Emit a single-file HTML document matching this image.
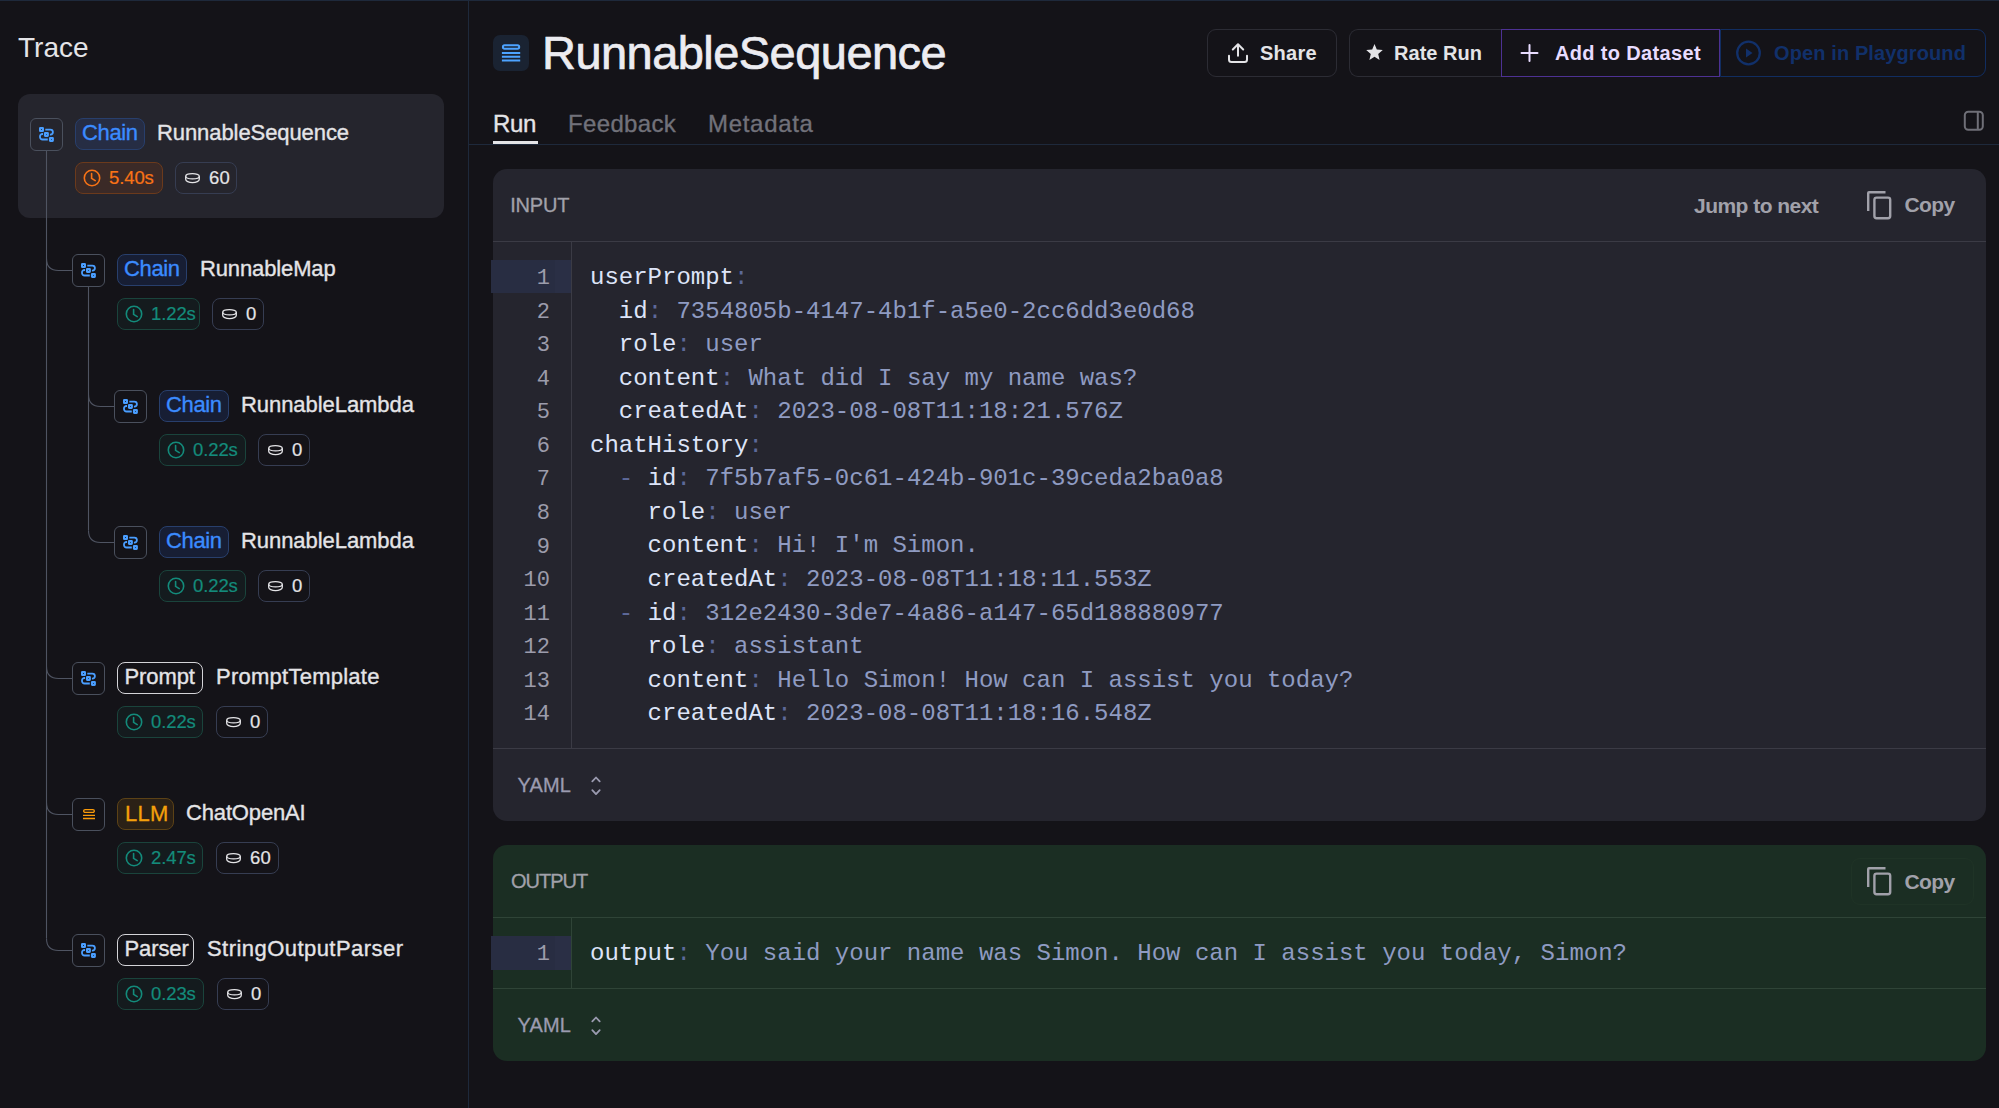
<!DOCTYPE html>
<html><head><meta charset="utf-8"><style>
html,body{margin:0;padding:0;}
body{width:1999px;height:1108px;overflow:hidden;background:#141318;position:relative;font-family:'Liberation Sans', sans-serif;}
</style></head><body>
<div style="position:absolute;left:0px;top:0px;width:1999px;height:1px;background:#1e293b;border-radius:0px;"></div>
<div style="position:absolute;left:468px;top:0px;width:1px;height:1108px;background:#1e293b;border-radius:0px;"></div>
<div style="position:absolute;left:18px;top:34.20px;font:normal 28px/28px 'Liberation Sans', sans-serif;color:#e4e4e7;letter-spacing:0px;white-space:pre;">Trace</div>
<div style="position:absolute;left:18px;top:94px;width:426px;height:124px;background:#25252d;border-radius:12px;"></div>
<svg style="position:absolute;left:0px;top:0px;" width="468" height="1108" viewBox="0 0 468 1108" fill="none"><path d="M46.5 151 L46.5 938.5" stroke="#4f5462" stroke-width="1.1"/><path d="M46.5 258.5 Q46.5 270.5 58.5 270.5 L72 270.5" stroke="#4f5462" stroke-width="1.1"/><path d="M46.5 666.5 Q46.5 678.5 58.5 678.5 L72 678.5" stroke="#4f5462" stroke-width="1.1"/><path d="M46.5 802.5 Q46.5 814.5 58.5 814.5 L72 814.5" stroke="#4f5462" stroke-width="1.1"/><path d="M46.5 938.5 Q46.5 950.5 58.5 950.5 L72 950.5" stroke="#4f5462" stroke-width="1.1"/><path d="M88.5 287 L88.5 530.5" stroke="#4f5462" stroke-width="1.1"/><path d="M88.5 394.5 Q88.5 406.5 100.5 406.5 L114 406.5" stroke="#4f5462" stroke-width="1.1"/><path d="M88.5 530.5 Q88.5 542.5 100.5 542.5 L114 542.5" stroke="#4f5462" stroke-width="1.1"/></svg>
<div style="position:absolute;left:30px;top:118px;width:33px;height:33px;background:#25252d;border:1.3px solid #4a505d;box-sizing:border-box;border-radius:6px;"></div>
<svg style="position:absolute;left:39px;top:127px;" width="15" height="15" viewBox="0 0 15 15" fill="none"><rect x="1.05" y="1.05" width="2.9" height="2.9" rx="0.25" stroke="#4a9eff" stroke-width="2.1"/><rect x="5.95" y="5.95" width="2.9" height="2.9" rx="0.25" stroke="#4a9eff" stroke-width="2.1"/><rect x="10.95" y="10.95" width="2.9" height="2.9" rx="0.25" stroke="#4a9eff" stroke-width="2.1"/><path d="M6.3 2.6 H11.4 A2.5 2.5 0 0 1 13.9 5.1 A2.5 2.5 0 0 1 11.4 7.6 H10.9" stroke="#4a9eff" stroke-width="1.8"/><path d="M4 7 H3.5 A2.5 2.5 0 0 0 1.0 9.5 V10 A2.5 2.5 0 0 0 3.5 12.5 H8.8" stroke="#4a9eff" stroke-width="1.8"/></svg>
<div style="position:absolute;left:75px;top:118px;width:70px;height:32px;background:#262d44;border:1px solid #283f6c;box-sizing:border-box;border-radius:8px;"></div>
<div style="position:absolute;left:82px;top:122.38px;font:normal 22px/22px 'Liberation Sans', sans-serif;color:#3b8bff;letter-spacing:-0.35px;white-space:pre;-webkit-text-stroke:0.35px #3b8bff;">Chain</div>
<div style="position:absolute;left:157px;top:122.38px;font:normal 22px/22px 'Liberation Sans', sans-serif;color:#e4e4e7;letter-spacing:-0.08px;white-space:pre;-webkit-text-stroke:0.35px #e4e4e7;">RunnableSequence</div>
<div style="position:absolute;left:75px;top:162px;width:88px;height:32px;background:#3b2a27;border:1px solid #6b3a1c;box-sizing:border-box;border-radius:8px;"></div>
<svg style="position:absolute;left:83.4px;top:168.6px;" width="18" height="18" viewBox="0 0 18 18" fill="none"><circle cx="9" cy="9" r="7.7" stroke="#f97316" stroke-width="1.6"/><path d="M8.6 4.6 V9.4 L12.2 11.6" stroke="#f97316" stroke-width="1.6" stroke-linecap="round" stroke-linejoin="round"/></svg>
<div style="position:absolute;left:109px;top:169.04px;font:normal 18.5px/18.5px 'Liberation Sans', sans-serif;color:#f97316;letter-spacing:-0.1px;white-space:pre;-webkit-text-stroke:0.2px #f97316;">5.40s</div>
<div style="position:absolute;left:175px;top:162px;width:62px;height:32px;background:transparent;border:1px solid #363d52;box-sizing:border-box;border-radius:8px;"></div>
<svg style="position:absolute;left:185px;top:172.6px;" width="15" height="11" viewBox="0 0 15 11" fill="none"><ellipse cx="7.5" cy="3.3" rx="6.8" ry="2.65" stroke="#e4e4e7" stroke-width="1.3"/><path d="M0.7 3.3 V6.3 A6.8 3.35 0 0 0 14.3 6.3 V3.3" stroke="#e4e4e7" stroke-width="1.3"/></svg>
<div style="position:absolute;left:209px;top:169.04px;font:normal 18.5px/18.5px 'Liberation Sans', sans-serif;color:#e4e4e7;letter-spacing:0.3px;white-space:pre;-webkit-text-stroke:0.2px #e4e4e7;">60</div>
<div style="position:absolute;left:72px;top:254px;width:33px;height:33px;background:#141318;border:1.3px solid #4a505d;box-sizing:border-box;border-radius:6px;"></div>
<svg style="position:absolute;left:81px;top:263px;" width="15" height="15" viewBox="0 0 15 15" fill="none"><rect x="1.05" y="1.05" width="2.9" height="2.9" rx="0.25" stroke="#4a9eff" stroke-width="2.1"/><rect x="5.95" y="5.95" width="2.9" height="2.9" rx="0.25" stroke="#4a9eff" stroke-width="2.1"/><rect x="10.95" y="10.95" width="2.9" height="2.9" rx="0.25" stroke="#4a9eff" stroke-width="2.1"/><path d="M6.3 2.6 H11.4 A2.5 2.5 0 0 1 13.9 5.1 A2.5 2.5 0 0 1 11.4 7.6 H10.9" stroke="#4a9eff" stroke-width="1.8"/><path d="M4 7 H3.5 A2.5 2.5 0 0 0 1.0 9.5 V10 A2.5 2.5 0 0 0 3.5 12.5 H8.8" stroke="#4a9eff" stroke-width="1.8"/></svg>
<div style="position:absolute;left:117px;top:254px;width:70px;height:32px;background:#171e34;border:1px solid #283f6c;box-sizing:border-box;border-radius:8px;"></div>
<div style="position:absolute;left:124px;top:258.38px;font:normal 22px/22px 'Liberation Sans', sans-serif;color:#3b8bff;letter-spacing:-0.35px;white-space:pre;-webkit-text-stroke:0.35px #3b8bff;">Chain</div>
<div style="position:absolute;left:200px;top:258.38px;font:normal 22px/22px 'Liberation Sans', sans-serif;color:#e4e4e7;letter-spacing:-0.13px;white-space:pre;-webkit-text-stroke:0.35px #e4e4e7;">RunnableMap</div>
<div style="position:absolute;left:117px;top:298px;width:83px;height:32px;background:#141b1e;border:1px solid #1a443c;box-sizing:border-box;border-radius:8px;"></div>
<svg style="position:absolute;left:125.4px;top:304.6px;" width="18" height="18" viewBox="0 0 18 18" fill="none"><circle cx="9" cy="9" r="7.7" stroke="#138b7b" stroke-width="1.6"/><path d="M8.6 4.6 V9.4 L12.2 11.6" stroke="#138b7b" stroke-width="1.6" stroke-linecap="round" stroke-linejoin="round"/></svg>
<div style="position:absolute;left:151px;top:305.04px;font:normal 18.5px/18.5px 'Liberation Sans', sans-serif;color:#138b7b;letter-spacing:-0.1px;white-space:pre;-webkit-text-stroke:0.2px #138b7b;">1.22s</div>
<div style="position:absolute;left:212px;top:298px;width:52px;height:32px;background:transparent;border:1px solid #363d52;box-sizing:border-box;border-radius:8px;"></div>
<svg style="position:absolute;left:222px;top:308.6px;" width="15" height="11" viewBox="0 0 15 11" fill="none"><ellipse cx="7.5" cy="3.3" rx="6.8" ry="2.65" stroke="#e4e4e7" stroke-width="1.3"/><path d="M0.7 3.3 V6.3 A6.8 3.35 0 0 0 14.3 6.3 V3.3" stroke="#e4e4e7" stroke-width="1.3"/></svg>
<div style="position:absolute;left:246px;top:305.04px;font:normal 18.5px/18.5px 'Liberation Sans', sans-serif;color:#e4e4e7;letter-spacing:0.3px;white-space:pre;-webkit-text-stroke:0.2px #e4e4e7;">0</div>
<div style="position:absolute;left:114px;top:390px;width:33px;height:33px;background:#141318;border:1.3px solid #4a505d;box-sizing:border-box;border-radius:6px;"></div>
<svg style="position:absolute;left:123px;top:399px;" width="15" height="15" viewBox="0 0 15 15" fill="none"><rect x="1.05" y="1.05" width="2.9" height="2.9" rx="0.25" stroke="#4a9eff" stroke-width="2.1"/><rect x="5.95" y="5.95" width="2.9" height="2.9" rx="0.25" stroke="#4a9eff" stroke-width="2.1"/><rect x="10.95" y="10.95" width="2.9" height="2.9" rx="0.25" stroke="#4a9eff" stroke-width="2.1"/><path d="M6.3 2.6 H11.4 A2.5 2.5 0 0 1 13.9 5.1 A2.5 2.5 0 0 1 11.4 7.6 H10.9" stroke="#4a9eff" stroke-width="1.8"/><path d="M4 7 H3.5 A2.5 2.5 0 0 0 1.0 9.5 V10 A2.5 2.5 0 0 0 3.5 12.5 H8.8" stroke="#4a9eff" stroke-width="1.8"/></svg>
<div style="position:absolute;left:159px;top:390px;width:70px;height:32px;background:#171e34;border:1px solid #283f6c;box-sizing:border-box;border-radius:8px;"></div>
<div style="position:absolute;left:166px;top:394.38px;font:normal 22px/22px 'Liberation Sans', sans-serif;color:#3b8bff;letter-spacing:-0.35px;white-space:pre;-webkit-text-stroke:0.35px #3b8bff;">Chain</div>
<div style="position:absolute;left:241px;top:394.38px;font:normal 22px/22px 'Liberation Sans', sans-serif;color:#e4e4e7;letter-spacing:-0.06px;white-space:pre;-webkit-text-stroke:0.35px #e4e4e7;">RunnableLambda</div>
<div style="position:absolute;left:159px;top:434px;width:87px;height:32px;background:#141b1e;border:1px solid #1a443c;box-sizing:border-box;border-radius:8px;"></div>
<svg style="position:absolute;left:167.4px;top:440.6px;" width="18" height="18" viewBox="0 0 18 18" fill="none"><circle cx="9" cy="9" r="7.7" stroke="#138b7b" stroke-width="1.6"/><path d="M8.6 4.6 V9.4 L12.2 11.6" stroke="#138b7b" stroke-width="1.6" stroke-linecap="round" stroke-linejoin="round"/></svg>
<div style="position:absolute;left:193px;top:441.04px;font:normal 18.5px/18.5px 'Liberation Sans', sans-serif;color:#138b7b;letter-spacing:-0.1px;white-space:pre;-webkit-text-stroke:0.2px #138b7b;">0.22s</div>
<div style="position:absolute;left:258px;top:434px;width:52px;height:32px;background:transparent;border:1px solid #363d52;box-sizing:border-box;border-radius:8px;"></div>
<svg style="position:absolute;left:268px;top:444.6px;" width="15" height="11" viewBox="0 0 15 11" fill="none"><ellipse cx="7.5" cy="3.3" rx="6.8" ry="2.65" stroke="#e4e4e7" stroke-width="1.3"/><path d="M0.7 3.3 V6.3 A6.8 3.35 0 0 0 14.3 6.3 V3.3" stroke="#e4e4e7" stroke-width="1.3"/></svg>
<div style="position:absolute;left:292px;top:441.04px;font:normal 18.5px/18.5px 'Liberation Sans', sans-serif;color:#e4e4e7;letter-spacing:0.3px;white-space:pre;-webkit-text-stroke:0.2px #e4e4e7;">0</div>
<div style="position:absolute;left:114px;top:526px;width:33px;height:33px;background:#141318;border:1.3px solid #4a505d;box-sizing:border-box;border-radius:6px;"></div>
<svg style="position:absolute;left:123px;top:535px;" width="15" height="15" viewBox="0 0 15 15" fill="none"><rect x="1.05" y="1.05" width="2.9" height="2.9" rx="0.25" stroke="#4a9eff" stroke-width="2.1"/><rect x="5.95" y="5.95" width="2.9" height="2.9" rx="0.25" stroke="#4a9eff" stroke-width="2.1"/><rect x="10.95" y="10.95" width="2.9" height="2.9" rx="0.25" stroke="#4a9eff" stroke-width="2.1"/><path d="M6.3 2.6 H11.4 A2.5 2.5 0 0 1 13.9 5.1 A2.5 2.5 0 0 1 11.4 7.6 H10.9" stroke="#4a9eff" stroke-width="1.8"/><path d="M4 7 H3.5 A2.5 2.5 0 0 0 1.0 9.5 V10 A2.5 2.5 0 0 0 3.5 12.5 H8.8" stroke="#4a9eff" stroke-width="1.8"/></svg>
<div style="position:absolute;left:159px;top:526px;width:70px;height:32px;background:#171e34;border:1px solid #283f6c;box-sizing:border-box;border-radius:8px;"></div>
<div style="position:absolute;left:166px;top:530.38px;font:normal 22px/22px 'Liberation Sans', sans-serif;color:#3b8bff;letter-spacing:-0.35px;white-space:pre;-webkit-text-stroke:0.35px #3b8bff;">Chain</div>
<div style="position:absolute;left:241px;top:530.38px;font:normal 22px/22px 'Liberation Sans', sans-serif;color:#e4e4e7;letter-spacing:-0.06px;white-space:pre;-webkit-text-stroke:0.35px #e4e4e7;">RunnableLambda</div>
<div style="position:absolute;left:159px;top:570px;width:87px;height:32px;background:#141b1e;border:1px solid #1a443c;box-sizing:border-box;border-radius:8px;"></div>
<svg style="position:absolute;left:167.4px;top:576.6px;" width="18" height="18" viewBox="0 0 18 18" fill="none"><circle cx="9" cy="9" r="7.7" stroke="#138b7b" stroke-width="1.6"/><path d="M8.6 4.6 V9.4 L12.2 11.6" stroke="#138b7b" stroke-width="1.6" stroke-linecap="round" stroke-linejoin="round"/></svg>
<div style="position:absolute;left:193px;top:577.04px;font:normal 18.5px/18.5px 'Liberation Sans', sans-serif;color:#138b7b;letter-spacing:-0.1px;white-space:pre;-webkit-text-stroke:0.2px #138b7b;">0.22s</div>
<div style="position:absolute;left:258px;top:570px;width:52px;height:32px;background:transparent;border:1px solid #363d52;box-sizing:border-box;border-radius:8px;"></div>
<svg style="position:absolute;left:268px;top:580.6px;" width="15" height="11" viewBox="0 0 15 11" fill="none"><ellipse cx="7.5" cy="3.3" rx="6.8" ry="2.65" stroke="#e4e4e7" stroke-width="1.3"/><path d="M0.7 3.3 V6.3 A6.8 3.35 0 0 0 14.3 6.3 V3.3" stroke="#e4e4e7" stroke-width="1.3"/></svg>
<div style="position:absolute;left:292px;top:577.04px;font:normal 18.5px/18.5px 'Liberation Sans', sans-serif;color:#e4e4e7;letter-spacing:0.3px;white-space:pre;-webkit-text-stroke:0.2px #e4e4e7;">0</div>
<div style="position:absolute;left:72px;top:662px;width:33px;height:33px;background:#141318;border:1.3px solid #4a505d;box-sizing:border-box;border-radius:6px;"></div>
<svg style="position:absolute;left:81px;top:671px;" width="15" height="15" viewBox="0 0 15 15" fill="none"><rect x="1.05" y="1.05" width="2.9" height="2.9" rx="0.25" stroke="#4a9eff" stroke-width="2.1"/><rect x="5.95" y="5.95" width="2.9" height="2.9" rx="0.25" stroke="#4a9eff" stroke-width="2.1"/><rect x="10.95" y="10.95" width="2.9" height="2.9" rx="0.25" stroke="#4a9eff" stroke-width="2.1"/><path d="M6.3 2.6 H11.4 A2.5 2.5 0 0 1 13.9 5.1 A2.5 2.5 0 0 1 11.4 7.6 H10.9" stroke="#4a9eff" stroke-width="1.8"/><path d="M4 7 H3.5 A2.5 2.5 0 0 0 1.0 9.5 V10 A2.5 2.5 0 0 0 3.5 12.5 H8.8" stroke="#4a9eff" stroke-width="1.8"/></svg>
<div style="position:absolute;left:117px;top:662px;width:86px;height:32px;background:transparent;border:1.5px solid #d4d4d8;box-sizing:border-box;border-radius:8px;"></div>
<div style="position:absolute;left:124.5px;top:666.38px;font:normal 22px/22px 'Liberation Sans', sans-serif;color:#e4e4e7;letter-spacing:-0.1px;white-space:pre;-webkit-text-stroke:0.35px #e4e4e7;">Prompt</div>
<div style="position:absolute;left:216px;top:666.38px;font:normal 22px/22px 'Liberation Sans', sans-serif;color:#e4e4e7;letter-spacing:0.25px;white-space:pre;-webkit-text-stroke:0.35px #e4e4e7;">PromptTemplate</div>
<div style="position:absolute;left:117px;top:706px;width:86px;height:32px;background:#141b1e;border:1px solid #1a443c;box-sizing:border-box;border-radius:8px;"></div>
<svg style="position:absolute;left:125.4px;top:712.6px;" width="18" height="18" viewBox="0 0 18 18" fill="none"><circle cx="9" cy="9" r="7.7" stroke="#138b7b" stroke-width="1.6"/><path d="M8.6 4.6 V9.4 L12.2 11.6" stroke="#138b7b" stroke-width="1.6" stroke-linecap="round" stroke-linejoin="round"/></svg>
<div style="position:absolute;left:151px;top:713.04px;font:normal 18.5px/18.5px 'Liberation Sans', sans-serif;color:#138b7b;letter-spacing:-0.1px;white-space:pre;-webkit-text-stroke:0.2px #138b7b;">0.22s</div>
<div style="position:absolute;left:216px;top:706px;width:52px;height:32px;background:transparent;border:1px solid #363d52;box-sizing:border-box;border-radius:8px;"></div>
<svg style="position:absolute;left:226px;top:716.6px;" width="15" height="11" viewBox="0 0 15 11" fill="none"><ellipse cx="7.5" cy="3.3" rx="6.8" ry="2.65" stroke="#e4e4e7" stroke-width="1.3"/><path d="M0.7 3.3 V6.3 A6.8 3.35 0 0 0 14.3 6.3 V3.3" stroke="#e4e4e7" stroke-width="1.3"/></svg>
<div style="position:absolute;left:250px;top:713.04px;font:normal 18.5px/18.5px 'Liberation Sans', sans-serif;color:#e4e4e7;letter-spacing:0.3px;white-space:pre;-webkit-text-stroke:0.2px #e4e4e7;">0</div>
<div style="position:absolute;left:72px;top:798px;width:33px;height:33px;background:#141318;border:1.3px solid #4a505d;box-sizing:border-box;border-radius:6px;"></div>
<svg style="position:absolute;left:82px;top:808px;" width="14" height="12" viewBox="0 0 14 12" fill="none"><rect x="1.65" y="1.55" width="10.7" height="2.9" rx="1.45" stroke="#f99a0a" stroke-width="1.3"/><path d="M1 7.4 H13 M1 10.5 H13" stroke="#f99a0a" stroke-width="1.3"/></svg>
<div style="position:absolute;left:117px;top:798px;width:57px;height:32px;background:#2b2116;border:1px solid #5c4216;box-sizing:border-box;border-radius:8px;"></div>
<div style="position:absolute;left:125px;top:802.98px;font:normal 22px/22px 'Liberation Sans', sans-serif;color:#f5a00b;letter-spacing:0.3px;white-space:pre;-webkit-text-stroke:0.3px #f5a00b;">LLM</div>
<div style="position:absolute;left:186px;top:802.38px;font:normal 22px/22px 'Liberation Sans', sans-serif;color:#e4e4e7;letter-spacing:-0.15px;white-space:pre;-webkit-text-stroke:0.35px #e4e4e7;">ChatOpenAI</div>
<div style="position:absolute;left:117px;top:842px;width:86px;height:32px;background:#141b1e;border:1px solid #1a443c;box-sizing:border-box;border-radius:8px;"></div>
<svg style="position:absolute;left:125.4px;top:848.6px;" width="18" height="18" viewBox="0 0 18 18" fill="none"><circle cx="9" cy="9" r="7.7" stroke="#138b7b" stroke-width="1.6"/><path d="M8.6 4.6 V9.4 L12.2 11.6" stroke="#138b7b" stroke-width="1.6" stroke-linecap="round" stroke-linejoin="round"/></svg>
<div style="position:absolute;left:151px;top:849.04px;font:normal 18.5px/18.5px 'Liberation Sans', sans-serif;color:#138b7b;letter-spacing:-0.1px;white-space:pre;-webkit-text-stroke:0.2px #138b7b;">2.47s</div>
<div style="position:absolute;left:216px;top:842px;width:63px;height:32px;background:transparent;border:1px solid #363d52;box-sizing:border-box;border-radius:8px;"></div>
<svg style="position:absolute;left:226px;top:852.6px;" width="15" height="11" viewBox="0 0 15 11" fill="none"><ellipse cx="7.5" cy="3.3" rx="6.8" ry="2.65" stroke="#e4e4e7" stroke-width="1.3"/><path d="M0.7 3.3 V6.3 A6.8 3.35 0 0 0 14.3 6.3 V3.3" stroke="#e4e4e7" stroke-width="1.3"/></svg>
<div style="position:absolute;left:250px;top:849.04px;font:normal 18.5px/18.5px 'Liberation Sans', sans-serif;color:#e4e4e7;letter-spacing:0.3px;white-space:pre;-webkit-text-stroke:0.2px #e4e4e7;">60</div>
<div style="position:absolute;left:72px;top:934px;width:33px;height:33px;background:#141318;border:1.3px solid #4a505d;box-sizing:border-box;border-radius:6px;"></div>
<svg style="position:absolute;left:81px;top:943px;" width="15" height="15" viewBox="0 0 15 15" fill="none"><rect x="1.05" y="1.05" width="2.9" height="2.9" rx="0.25" stroke="#4a9eff" stroke-width="2.1"/><rect x="5.95" y="5.95" width="2.9" height="2.9" rx="0.25" stroke="#4a9eff" stroke-width="2.1"/><rect x="10.95" y="10.95" width="2.9" height="2.9" rx="0.25" stroke="#4a9eff" stroke-width="2.1"/><path d="M6.3 2.6 H11.4 A2.5 2.5 0 0 1 13.9 5.1 A2.5 2.5 0 0 1 11.4 7.6 H10.9" stroke="#4a9eff" stroke-width="1.8"/><path d="M4 7 H3.5 A2.5 2.5 0 0 0 1.0 9.5 V10 A2.5 2.5 0 0 0 3.5 12.5 H8.8" stroke="#4a9eff" stroke-width="1.8"/></svg>
<div style="position:absolute;left:117px;top:934px;width:77px;height:32px;background:transparent;border:1.5px solid #d4d4d8;box-sizing:border-box;border-radius:8px;"></div>
<div style="position:absolute;left:124.5px;top:938.38px;font:normal 22px/22px 'Liberation Sans', sans-serif;color:#e4e4e7;letter-spacing:-0.1px;white-space:pre;-webkit-text-stroke:0.35px #e4e4e7;">Parser</div>
<div style="position:absolute;left:207px;top:938.38px;font:normal 22px/22px 'Liberation Sans', sans-serif;color:#e4e4e7;letter-spacing:0.45px;white-space:pre;-webkit-text-stroke:0.35px #e4e4e7;">StringOutputParser</div>
<div style="position:absolute;left:117px;top:978px;width:87px;height:32px;background:#141b1e;border:1px solid #1a443c;box-sizing:border-box;border-radius:8px;"></div>
<svg style="position:absolute;left:125.4px;top:984.6px;" width="18" height="18" viewBox="0 0 18 18" fill="none"><circle cx="9" cy="9" r="7.7" stroke="#138b7b" stroke-width="1.6"/><path d="M8.6 4.6 V9.4 L12.2 11.6" stroke="#138b7b" stroke-width="1.6" stroke-linecap="round" stroke-linejoin="round"/></svg>
<div style="position:absolute;left:151px;top:985.04px;font:normal 18.5px/18.5px 'Liberation Sans', sans-serif;color:#138b7b;letter-spacing:-0.1px;white-space:pre;-webkit-text-stroke:0.2px #138b7b;">0.23s</div>
<div style="position:absolute;left:217px;top:978px;width:52px;height:32px;background:transparent;border:1px solid #363d52;box-sizing:border-box;border-radius:8px;"></div>
<svg style="position:absolute;left:227px;top:988.6px;" width="15" height="11" viewBox="0 0 15 11" fill="none"><ellipse cx="7.5" cy="3.3" rx="6.8" ry="2.65" stroke="#e4e4e7" stroke-width="1.3"/><path d="M0.7 3.3 V6.3 A6.8 3.35 0 0 0 14.3 6.3 V3.3" stroke="#e4e4e7" stroke-width="1.3"/></svg>
<div style="position:absolute;left:251px;top:985.04px;font:normal 18.5px/18.5px 'Liberation Sans', sans-serif;color:#e4e4e7;letter-spacing:0.3px;white-space:pre;-webkit-text-stroke:0.2px #e4e4e7;">0</div>
<div style="position:absolute;left:493px;top:35px;width:36px;height:36px;background:#1a2332;border-radius:7px;"></div>
<svg style="position:absolute;left:501px;top:43px;" width="20" height="20" viewBox="0 0 20 20" fill="none"><rect x="1.9" y="2.35" width="16.3" height="3.45" rx="1.7" stroke="#4da3ff" stroke-width="2"/><path d="M0.9 10.04 H19.2 M0.9 13.76 H19.2 M0.9 17.48 H19.2" stroke="#4da3ff" stroke-width="2"/></svg>
<div style="position:absolute;left:542px;top:29.21px;font:normal 47px/47px 'Liberation Sans', sans-serif;color:#ececf1;letter-spacing:-0.55px;white-space:pre;-webkit-text-stroke:0.7px #ececf1;">RunnableSequence</div>
<div style="position:absolute;left:1207px;top:29px;width:130px;height:48px;background:transparent;border:1.5px solid #2c2c34;box-sizing:border-box;border-radius:9px;"></div>
<svg style="position:absolute;left:1226px;top:42px;" width="24" height="22" viewBox="0 0 24 22" fill="none"><path d="M12 13.8 V2.5 M6.8 7.5 L12 2.3 L17.2 7.5" stroke="#e4e4e7" stroke-width="2" stroke-linecap="round" stroke-linejoin="round"/><path d="M3 13.8 V17.5 Q3 20 5.5 20 H18.5 Q21 20 21 17.5 V13.8" stroke="#e4e4e7" stroke-width="2" stroke-linecap="round"/></svg>
<div style="position:absolute;left:1260px;top:42.77px;font:bold 20px/20px 'Liberation Sans', sans-serif;color:#e4e4e7;letter-spacing:0.28px;white-space:pre;">Share</div>
<div style="position:absolute;left:1349px;top:29px;width:153px;height:48px;box-sizing:border-box;border:1.5px solid #2c2c34;border-right:none;border-radius:9px 0 0 9px;"></div>
<svg style="position:absolute;left:1365px;top:43px;" width="19" height="19" viewBox="0 0 19 19" fill="none"><path d="M9.5 1 L11.8 6.6 L17.8 7.1 L13.2 11 L14.6 16.9 L9.5 13.7 L4.4 16.9 L5.8 11 L1.2 7.1 L7.2 6.6 Z" fill="#e4e4e7"/></svg>
<div style="position:absolute;left:1394px;top:42.77px;font:bold 20px/20px 'Liberation Sans', sans-serif;color:#e4e4e7;letter-spacing:0.03px;white-space:pre;">Rate Run</div>
<div style="position:absolute;left:1501px;top:29px;width:219px;height:48px;background:transparent;border:1.3px solid #4d3193;box-sizing:border-box;border-radius:0px;"></div>
<svg style="position:absolute;left:1519px;top:43px;" width="21" height="20" viewBox="0 0 21 20" fill="none"><path d="M10.5 2 V18 M2.5 10 H18.5" stroke="#e8dcff" stroke-width="2" stroke-linecap="round"/></svg>
<div style="position:absolute;left:1555px;top:42.77px;font:bold 20px/20px 'Liberation Sans', sans-serif;color:#e8dcff;letter-spacing:0.35px;white-space:pre;">Add to Dataset</div>
<div style="position:absolute;left:1720px;top:29px;width:266px;height:48px;box-sizing:border-box;border:1.3px solid #112d60;border-radius:0 9px 9px 0;"></div>
<svg style="position:absolute;left:1735px;top:40px;" width="27" height="26" viewBox="0 0 27 26" fill="none"><circle cx="13.5" cy="13" r="11.3" stroke="#11306a" stroke-width="2.3"/><path d="M11 8.5 L17.5 13 L11 17.5 Z" fill="#11306a"/></svg>
<div style="position:absolute;left:1774px;top:42.77px;font:bold 20px/20px 'Liberation Sans', sans-serif;color:#11306a;letter-spacing:0.11px;white-space:pre;">Open in Playground</div>
<div style="position:absolute;left:493px;top:112.08px;font:normal 24px/24px 'Liberation Sans', sans-serif;color:#e4e4e7;letter-spacing:-0.3px;white-space:pre;-webkit-text-stroke:0.35px #e4e4e7;">Run</div>
<div style="position:absolute;left:568px;top:112.08px;font:normal 24px/24px 'Liberation Sans', sans-serif;color:#71717a;letter-spacing:0.35px;white-space:pre;-webkit-text-stroke:0.35px #71717a;">Feedback</div>
<div style="position:absolute;left:708px;top:112.08px;font:normal 24px/24px 'Liberation Sans', sans-serif;color:#71717a;letter-spacing:0.7px;white-space:pre;-webkit-text-stroke:0.35px #71717a;">Metadata</div>
<div style="position:absolute;left:493px;top:141px;width:45px;height:3px;background:#e4e4e7;border-radius:0px;"></div>
<div style="position:absolute;left:469px;top:144px;width:1530px;height:1px;background:#1e293b;border-radius:0px;"></div>
<svg style="position:absolute;left:1962px;top:109px;" width="24" height="24" viewBox="0 0 24 24" fill="none"><rect x="2.8" y="2.8" width="18" height="18" rx="3.5" stroke="#6f6f77" stroke-width="2"/><path d="M15.8 3 V20.6" stroke="#6f6f77" stroke-width="2"/></svg>
<div style="position:absolute;left:493px;top:169px;width:1493px;height:652px;background:#25252e;border-radius:14px;"></div>
<div style="position:absolute;left:510.2px;top:194.97px;font:normal 20px/20px 'Liberation Sans', sans-serif;color:#a1a1aa;letter-spacing:-0.2px;white-space:pre;-webkit-text-stroke:0.3px #a1a1aa;">INPUT</div>
<div style="position:absolute;left:1694px;top:194.62px;font:bold 21px/21px 'Liberation Sans', sans-serif;color:#a1a1aa;letter-spacing:-0.53px;white-space:pre;">Jump to next</div>
<svg style="position:absolute;left:1867px;top:191px;" width="25" height="29" viewBox="0 0 25 29" fill="none"><path d="M1.2 20 V2 Q1.2 1.2 2 1.2 H18.5" stroke="#a1a1aa" stroke-width="2.4"/><rect x="7.4" y="6.6" width="15.8" height="20.6" rx="2.2" stroke="#a1a1aa" stroke-width="2.4"/></svg>
<div style="position:absolute;left:1904.5px;top:194.42px;font:bold 21px/21px 'Liberation Sans', sans-serif;color:#a1a1aa;letter-spacing:-0.62px;white-space:pre;">Copy</div>
<div style="position:absolute;left:493px;top:241px;width:1493px;height:1px;background:#3b3b45;border-radius:0px;"></div>
<div style="position:absolute;left:571px;top:242px;width:1px;height:506px;background:#3b3b45;border-radius:0px;"></div>
<div style="position:absolute;left:493px;top:748px;width:1493px;height:1px;background:#3b3b45;border-radius:0px;"></div>
<div style="position:absolute;left:491px;top:260px;width:64px;height:33px;background:#282d42;border-radius:0px;"></div>
<div style="position:absolute;left:555px;top:260px;width:16px;height:33px;background:#2a2f45;border-radius:0px;"></div>
<div style="position:absolute;left:590px;top:266.10px;font:normal 24px/24px 'Liberation Mono', monospace;color:#dde4f8;letter-spacing:0px;white-space:pre;"><span style="color:#dde4f8">userPrompt</span><span style="color:#5d6999">:</span></div>
<div style="position:absolute;left:493px;width:57px;text-align:right;top:268.24px;font:normal 22px/22px 'Liberation Mono', monospace;color:#9c9cab;">1</div>
<div style="position:absolute;left:590px;top:299.64px;font:normal 24px/24px 'Liberation Mono', monospace;color:#dde4f8;letter-spacing:0px;white-space:pre;">  <span style="color:#dde4f8">id</span><span style="color:#5d6999">:</span> <span style="color:#8f9bc2">7354805b-4147-4b1f-a5e0-2cc6dd3e0d68</span></div>
<div style="position:absolute;left:493px;width:57px;text-align:right;top:301.78px;font:normal 22px/22px 'Liberation Mono', monospace;color:#9c9cab;">2</div>
<div style="position:absolute;left:590px;top:333.18px;font:normal 24px/24px 'Liberation Mono', monospace;color:#dde4f8;letter-spacing:0px;white-space:pre;">  <span style="color:#dde4f8">role</span><span style="color:#5d6999">:</span> <span style="color:#8f9bc2">user</span></div>
<div style="position:absolute;left:493px;width:57px;text-align:right;top:335.32px;font:normal 22px/22px 'Liberation Mono', monospace;color:#9c9cab;">3</div>
<div style="position:absolute;left:590px;top:366.72px;font:normal 24px/24px 'Liberation Mono', monospace;color:#dde4f8;letter-spacing:0px;white-space:pre;">  <span style="color:#dde4f8">content</span><span style="color:#5d6999">:</span> <span style="color:#8f9bc2">What did I say my name was?</span></div>
<div style="position:absolute;left:493px;width:57px;text-align:right;top:368.86px;font:normal 22px/22px 'Liberation Mono', monospace;color:#9c9cab;">4</div>
<div style="position:absolute;left:590px;top:400.26px;font:normal 24px/24px 'Liberation Mono', monospace;color:#dde4f8;letter-spacing:0px;white-space:pre;">  <span style="color:#dde4f8">createdAt</span><span style="color:#5d6999">:</span> <span style="color:#8f9bc2">2023-08-08T11:18:21.576Z</span></div>
<div style="position:absolute;left:493px;width:57px;text-align:right;top:402.40px;font:normal 22px/22px 'Liberation Mono', monospace;color:#9c9cab;">5</div>
<div style="position:absolute;left:590px;top:433.80px;font:normal 24px/24px 'Liberation Mono', monospace;color:#dde4f8;letter-spacing:0px;white-space:pre;"><span style="color:#dde4f8">chatHistory</span><span style="color:#5d6999">:</span></div>
<div style="position:absolute;left:493px;width:57px;text-align:right;top:435.94px;font:normal 22px/22px 'Liberation Mono', monospace;color:#9c9cab;">6</div>
<div style="position:absolute;left:590px;top:467.34px;font:normal 24px/24px 'Liberation Mono', monospace;color:#dde4f8;letter-spacing:0px;white-space:pre;">  <span style="color:#5d6999">-</span> <span style="color:#dde4f8">id</span><span style="color:#5d6999">:</span> <span style="color:#8f9bc2">7f5b7af5-0c61-424b-901c-39ceda2ba0a8</span></div>
<div style="position:absolute;left:493px;width:57px;text-align:right;top:469.48px;font:normal 22px/22px 'Liberation Mono', monospace;color:#9c9cab;">7</div>
<div style="position:absolute;left:590px;top:500.88px;font:normal 24px/24px 'Liberation Mono', monospace;color:#dde4f8;letter-spacing:0px;white-space:pre;">    <span style="color:#dde4f8">role</span><span style="color:#5d6999">:</span> <span style="color:#8f9bc2">user</span></div>
<div style="position:absolute;left:493px;width:57px;text-align:right;top:503.02px;font:normal 22px/22px 'Liberation Mono', monospace;color:#9c9cab;">8</div>
<div style="position:absolute;left:590px;top:534.42px;font:normal 24px/24px 'Liberation Mono', monospace;color:#dde4f8;letter-spacing:0px;white-space:pre;">    <span style="color:#dde4f8">content</span><span style="color:#5d6999">:</span> <span style="color:#8f9bc2">Hi! I'm Simon.</span></div>
<div style="position:absolute;left:493px;width:57px;text-align:right;top:536.56px;font:normal 22px/22px 'Liberation Mono', monospace;color:#9c9cab;">9</div>
<div style="position:absolute;left:590px;top:567.96px;font:normal 24px/24px 'Liberation Mono', monospace;color:#dde4f8;letter-spacing:0px;white-space:pre;">    <span style="color:#dde4f8">createdAt</span><span style="color:#5d6999">:</span> <span style="color:#8f9bc2">2023-08-08T11:18:11.553Z</span></div>
<div style="position:absolute;left:493px;width:57px;text-align:right;top:570.10px;font:normal 22px/22px 'Liberation Mono', monospace;color:#9c9cab;">10</div>
<div style="position:absolute;left:590px;top:601.50px;font:normal 24px/24px 'Liberation Mono', monospace;color:#dde4f8;letter-spacing:0px;white-space:pre;">  <span style="color:#5d6999">-</span> <span style="color:#dde4f8">id</span><span style="color:#5d6999">:</span> <span style="color:#8f9bc2">312e2430-3de7-4a86-a147-65d188880977</span></div>
<div style="position:absolute;left:493px;width:57px;text-align:right;top:603.64px;font:normal 22px/22px 'Liberation Mono', monospace;color:#9c9cab;">11</div>
<div style="position:absolute;left:590px;top:635.04px;font:normal 24px/24px 'Liberation Mono', monospace;color:#dde4f8;letter-spacing:0px;white-space:pre;">    <span style="color:#dde4f8">role</span><span style="color:#5d6999">:</span> <span style="color:#8f9bc2">assistant</span></div>
<div style="position:absolute;left:493px;width:57px;text-align:right;top:637.18px;font:normal 22px/22px 'Liberation Mono', monospace;color:#9c9cab;">12</div>
<div style="position:absolute;left:590px;top:668.58px;font:normal 24px/24px 'Liberation Mono', monospace;color:#dde4f8;letter-spacing:0px;white-space:pre;">    <span style="color:#dde4f8">content</span><span style="color:#5d6999">:</span> <span style="color:#8f9bc2">Hello Simon! How can I assist you today?</span></div>
<div style="position:absolute;left:493px;width:57px;text-align:right;top:670.72px;font:normal 22px/22px 'Liberation Mono', monospace;color:#9c9cab;">13</div>
<div style="position:absolute;left:590px;top:702.12px;font:normal 24px/24px 'Liberation Mono', monospace;color:#dde4f8;letter-spacing:0px;white-space:pre;">    <span style="color:#dde4f8">createdAt</span><span style="color:#5d6999">:</span> <span style="color:#8f9bc2">2023-08-08T11:18:16.548Z</span></div>
<div style="position:absolute;left:493px;width:57px;text-align:right;top:704.26px;font:normal 22px/22px 'Liberation Mono', monospace;color:#9c9cab;">14</div>
<div style="position:absolute;left:517.5px;top:775.27px;font:normal 20px/20px 'Liberation Sans', sans-serif;color:#9b9bb0;letter-spacing:0.1px;white-space:pre;-webkit-text-stroke:0.3px #9b9bb0;">YAML</div>
<svg style="position:absolute;left:591px;top:775.5px;" width="10" height="20" viewBox="0 0 10 20" fill="none"><path d="M1.3 5.4 L5 1.5 L8.7 5.4 M1.3 14.2 L5 18.1 L8.7 14.2" stroke="#9b9bb0" stroke-width="1.8" stroke-linecap="round" stroke-linejoin="round"/></svg>
<div style="position:absolute;left:493px;top:845px;width:1493px;height:216px;background:#1b2e23;border-radius:14px;"></div>
<div style="position:absolute;left:511px;top:871.17px;font:normal 20px/20px 'Liberation Sans', sans-serif;color:#a1a1aa;letter-spacing:-1.0px;white-space:pre;-webkit-text-stroke:0.3px #a1a1aa;">OUTPUT</div>
<div style="position:absolute;left:1851px;top:858px;width:123px;height:47px;background:transparent;border:1px solid #1f3326;box-sizing:border-box;border-radius:9px;"></div>
<svg style="position:absolute;left:1867px;top:867px;" width="25" height="29" viewBox="0 0 25 29" fill="none"><path d="M1.2 20 V2 Q1.2 1.2 2 1.2 H18.5" stroke="#a1a1aa" stroke-width="2.4"/><rect x="7.4" y="6.6" width="15.8" height="20.6" rx="2.2" stroke="#a1a1aa" stroke-width="2.4"/></svg>
<div style="position:absolute;left:1904.5px;top:871.12px;font:bold 21px/21px 'Liberation Sans', sans-serif;color:#a1a1aa;letter-spacing:-0.62px;white-space:pre;">Copy</div>
<div style="position:absolute;left:493px;top:917px;width:1493px;height:1px;background:#2f4437;border-radius:0px;"></div>
<div style="position:absolute;left:571px;top:918px;width:1px;height:70px;background:#2f4437;border-radius:0px;"></div>
<div style="position:absolute;left:493px;top:988px;width:1493px;height:1px;background:#2f4437;border-radius:0px;"></div>
<div style="position:absolute;left:491px;top:936px;width:64px;height:34px;background:#282d42;border-radius:0px;"></div>
<div style="position:absolute;left:555px;top:936px;width:16px;height:34px;background:#2a2f45;border-radius:0px;"></div>
<div style="position:absolute;left:590px;top:942.10px;font:normal 24px/24px 'Liberation Mono', monospace;color:#dde4f8;letter-spacing:0px;white-space:pre;"><span style="color:#dde4f8">output</span><span style="color:#5d6999">:</span> <span style="color:#8f9bc2">You said your name was Simon. How can I assist you today, Simon?</span></div>
<div style="position:absolute;left:493px;width:57px;text-align:right;top:944.24px;font:normal 22px/22px 'Liberation Mono', monospace;color:#9c9cab;">1</div>
<div style="position:absolute;left:517.5px;top:1015.07px;font:normal 20px/20px 'Liberation Sans', sans-serif;color:#9b9bb0;letter-spacing:0.1px;white-space:pre;-webkit-text-stroke:0.3px #9b9bb0;">YAML</div>
<svg style="position:absolute;left:591px;top:1015.5px;" width="10" height="20" viewBox="0 0 10 20" fill="none"><path d="M1.3 5.4 L5 1.5 L8.7 5.4 M1.3 14.2 L5 18.1 L8.7 14.2" stroke="#9b9bb0" stroke-width="1.8" stroke-linecap="round" stroke-linejoin="round"/></svg>
</body></html>
